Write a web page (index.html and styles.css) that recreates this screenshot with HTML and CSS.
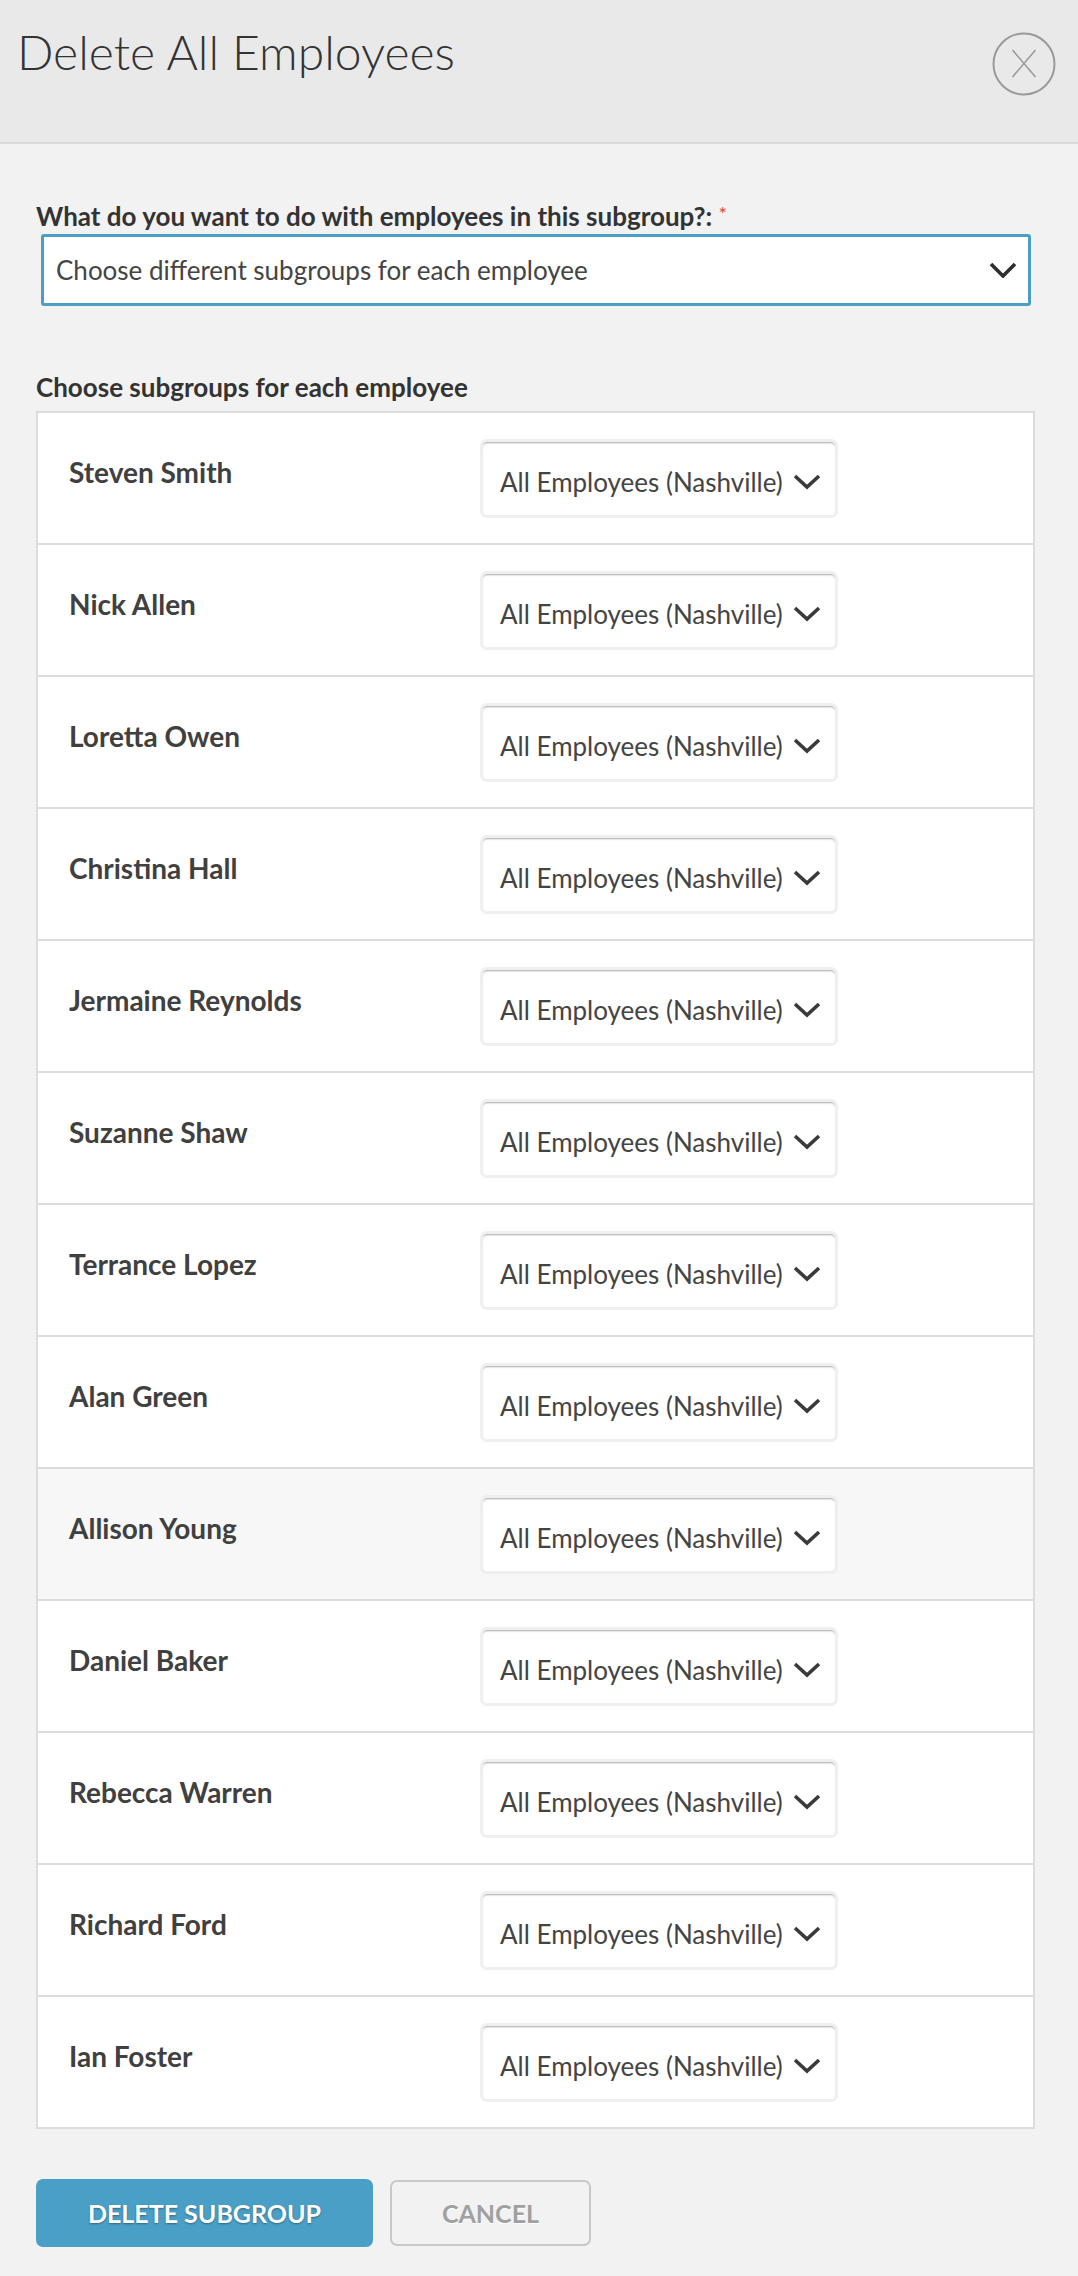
FILE: index.html
```html
<!DOCTYPE html>
<html lang="en">
<head>
<meta charset="utf-8">
<title>Delete All Employees</title>
<link rel="stylesheet" href="styles.css">
</head>
<body>
<div class="modal">
  <header class="modal-header">
    <h1 class="modal-title">Delete All Employees</h1>
    <button class="close-btn" aria-label="Close">
      <svg width="64" height="64" viewBox="0 0 64 64">
        <circle cx="32" cy="32" r="30.5" fill="none" stroke="#9a9a9a" stroke-width="2"/>
        <path d="M20.5 18 L43.5 45 M43.5 18 L20.5 45" stroke="#9a9a9a" stroke-width="1.6" fill="none"/>
      </svg>
    </button>
  </header>
  <main class="modal-body">
    <label class="field-label">What do you want to do with employees in this subgroup?: <span class="req">*</span></label>
    <div class="main-select">
      <span>Choose different subgroups for each employee</span>
      <svg class="chev" width="28" height="16" viewBox="0 0 28 16"><path d="M2 2 L14 14 L26 2" fill="none" stroke="#2e2e2e" stroke-width="3.6"/></svg>
    </div>
    <div class="section-label">Choose subgroups for each employee</div>
    <div class="emp-table">
      <div class="emp-row"><div class="emp-name">Steven Smith</div><div class="sub-select"><span>All Employees (Nashville)</span><svg class="chev-sm" width="28" height="16" viewBox="0 0 28 16"><path d="M2 2 L14 13 L26 2" fill="none" stroke="#3a3a3a" stroke-width="3.6"/></svg></div></div>
      <div class="emp-row"><div class="emp-name">Nick Allen</div><div class="sub-select"><span>All Employees (Nashville)</span><svg class="chev-sm" width="28" height="16" viewBox="0 0 28 16"><path d="M2 2 L14 13 L26 2" fill="none" stroke="#3a3a3a" stroke-width="3.6"/></svg></div></div>
      <div class="emp-row"><div class="emp-name">Loretta Owen</div><div class="sub-select"><span>All Employees (Nashville)</span><svg class="chev-sm" width="28" height="16" viewBox="0 0 28 16"><path d="M2 2 L14 13 L26 2" fill="none" stroke="#3a3a3a" stroke-width="3.6"/></svg></div></div>
      <div class="emp-row"><div class="emp-name">Christina Hall</div><div class="sub-select"><span>All Employees (Nashville)</span><svg class="chev-sm" width="28" height="16" viewBox="0 0 28 16"><path d="M2 2 L14 13 L26 2" fill="none" stroke="#3a3a3a" stroke-width="3.6"/></svg></div></div>
      <div class="emp-row"><div class="emp-name">Jermaine Reynolds</div><div class="sub-select"><span>All Employees (Nashville)</span><svg class="chev-sm" width="28" height="16" viewBox="0 0 28 16"><path d="M2 2 L14 13 L26 2" fill="none" stroke="#3a3a3a" stroke-width="3.6"/></svg></div></div>
      <div class="emp-row"><div class="emp-name">Suzanne Shaw</div><div class="sub-select"><span>All Employees (Nashville)</span><svg class="chev-sm" width="28" height="16" viewBox="0 0 28 16"><path d="M2 2 L14 13 L26 2" fill="none" stroke="#3a3a3a" stroke-width="3.6"/></svg></div></div>
      <div class="emp-row"><div class="emp-name">Terrance Lopez</div><div class="sub-select"><span>All Employees (Nashville)</span><svg class="chev-sm" width="28" height="16" viewBox="0 0 28 16"><path d="M2 2 L14 13 L26 2" fill="none" stroke="#3a3a3a" stroke-width="3.6"/></svg></div></div>
      <div class="emp-row"><div class="emp-name">Alan Green</div><div class="sub-select"><span>All Employees (Nashville)</span><svg class="chev-sm" width="28" height="16" viewBox="0 0 28 16"><path d="M2 2 L14 13 L26 2" fill="none" stroke="#3a3a3a" stroke-width="3.6"/></svg></div></div>
      <div class="emp-row hover"><div class="emp-name">Allison Young</div><div class="sub-select"><span>All Employees (Nashville)</span><svg class="chev-sm" width="28" height="16" viewBox="0 0 28 16"><path d="M2 2 L14 13 L26 2" fill="none" stroke="#3a3a3a" stroke-width="3.6"/></svg></div></div>
      <div class="emp-row"><div class="emp-name">Daniel Baker</div><div class="sub-select"><span>All Employees (Nashville)</span><svg class="chev-sm" width="28" height="16" viewBox="0 0 28 16"><path d="M2 2 L14 13 L26 2" fill="none" stroke="#3a3a3a" stroke-width="3.6"/></svg></div></div>
      <div class="emp-row"><div class="emp-name">Rebecca Warren</div><div class="sub-select"><span>All Employees (Nashville)</span><svg class="chev-sm" width="28" height="16" viewBox="0 0 28 16"><path d="M2 2 L14 13 L26 2" fill="none" stroke="#3a3a3a" stroke-width="3.6"/></svg></div></div>
      <div class="emp-row"><div class="emp-name">Richard Ford</div><div class="sub-select"><span>All Employees (Nashville)</span><svg class="chev-sm" width="28" height="16" viewBox="0 0 28 16"><path d="M2 2 L14 13 L26 2" fill="none" stroke="#3a3a3a" stroke-width="3.6"/></svg></div></div>
      <div class="emp-row"><div class="emp-name">Ian Foster</div><div class="sub-select"><span>All Employees (Nashville)</span><svg class="chev-sm" width="28" height="16" viewBox="0 0 28 16"><path d="M2 2 L14 13 L26 2" fill="none" stroke="#3a3a3a" stroke-width="3.6"/></svg></div></div>
    </div>
    <div class="actions">
      <button class="btn btn-primary">DELETE SUBGROUP</button>
      <button class="btn btn-secondary">CANCEL</button>
    </div>
  </main>
</div>
</body>
</html>
```
FILE: styles.css
```css
* { box-sizing: border-box; }
html, body {
  margin: 0;
  padding: 0;
  background: #f2f2f2;
  font-family: Lato, "Open Sans", "Liberation Sans", sans-serif;
}
.modal { width: 1078px; }
.modal-header {
  height: 144px;
  background: #e9e9e9;
  border-bottom: 2px solid #d8d8d8;
  display: flex;
  justify-content: space-between;
  align-items: flex-start;
  padding: 0 22px 0 17px;
}
.modal-title {
  margin: 0;
  padding-top: 23px;
  font-size: 48px;
  line-height: 1.2;
  font-weight: 300;
  color: #333;
}
.close-btn {
  margin-top: 32px;
  padding: 0;
  border: 0;
  background: none;
  width: 64px;
  height: 64px;
}
.close-btn svg { display: block; }
.modal-body {
  padding: 0 43px 28px 36px;
}
.field-label {
  display: block;
  padding-top: 57px;
  font-size: 26px;
  line-height: 1.2;
  font-weight: 700;
  color: #333;
}
.req { color: #e4473b; font-weight: 400; font-size: 20px; vertical-align: top; }
.main-select {
  margin: 2px 4px 0 5px;
  height: 72px;
  background: #fff;
  border: 3px solid #4a9fc5;
  border-radius: 3px;
  display: flex;
  align-items: center;
  justify-content: space-between;
  padding: 0 11px 0 12px;
  font-size: 26px;
  color: #444;
}
.chev { display: block; }
.section-label {
  padding-top: 66px;
  font-size: 26px;
  line-height: 1.2;
  font-weight: 700;
  color: #333;
}
.emp-table {
  margin-top: 8px;
  background: #fff;
  border: 2px solid #dcdcdc;
}
.emp-row {
  display: grid;
  grid-template-columns: 442px 358px;
  align-items: center;
  height: 132px;
  border-bottom: 2px solid #dcdcdc;
}
.emp-row:last-child { border-bottom: 0; height: 130px; }
.emp-row.hover { background: #f7f7f7; }
.emp-name {
  align-self: start;
  padding: 43px 0 0 31px;
  font-size: 28px;
  line-height: 1.2;
  font-weight: 700;
  color: #404040;
}
.sub-select {
  height: 79px;
  background: #fff;
  border: 3px solid #efefef;
  border-radius: 7px;
  box-shadow: inset 0 2px 2px -1px rgba(0,0,0,0.35);
  display: flex;
  align-items: center;
  justify-content: space-between;
  padding: 7px 14px 0 17px;
  font-size: 26px;
  color: #444;
  white-space: nowrap;
}
.chev-sm { display: block; flex: none; }
.actions {
  display: flex;
  gap: 17px;
  margin-top: 50px;
  align-items: center;
}
.btn {
  font-family: Lato, "Open Sans", "Liberation Sans", sans-serif;
  font-weight: 700;
  font-size: 25px;
  border-radius: 7px;
  cursor: pointer;
}
.btn-primary {
  width: 337px;
  height: 68px;
  background: #4a9fc6;
  border: 0;
  color: #fff;
  text-shadow: 0 1px 2px rgba(0,0,0,0.35);
}
.btn-secondary {
  width: 201px;
  height: 66px;
  background: #f2f2f2;
  border: 2px solid #c8c8c8;
  color: #a0a0a0;
  text-shadow: 0 1px 0 #fff;
}
```
